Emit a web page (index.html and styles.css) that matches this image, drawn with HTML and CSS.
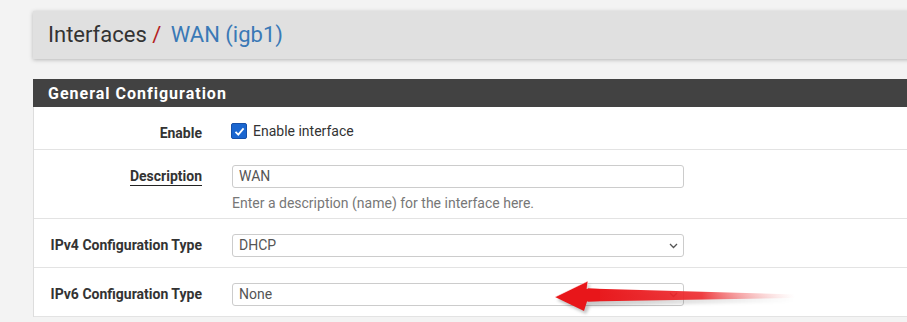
FILE: index.html
```html
<!DOCTYPE html>
<html>
	<head>
		<meta charset="utf-8">
		<link rel="stylesheet" href="styles.css">
	</head>
	<body>
		<div class="page">
			<div class="breadcrumb">
				<h1>Interfaces <span class="sep">/</span> <a href="#">WAN (igb1)</a></h1>
			</div>

			<div class="panel">
				<div class="panel-heading">General Configuration</div>
				<div class="panel-body">
					<div class="row row-enable">
						<div class="label">Enable</div>
						<div class="field">
							<label class="check"><span class="box"><svg width="11" height="11" viewBox="0 0 11 11"><path d="M1.5 5.8 L4.3 8.6 L9.6 2.4" fill="none" stroke="#fff" stroke-width="1.8"/></svg></span>Enable interface</label>
						</div>
					</div>
					<div class="row row-desc">
						<div class="label"><span class="under">Description</span></div>
						<div class="field">
							<div class="input">WAN</div>
							<div class="help">Enter a description (name) for the interface here.</div>
						</div>
					</div>
					<div class="row">
						<div class="label">IPv4 Configuration Type</div>
						<div class="field">
							<div class="input select">DHCP<svg class="chev" width="9" height="6" viewBox="0 0 9 6"><path d="M1 1 L4.5 4.5 L8 1" fill="none" stroke="#555" stroke-width="1.3"/></svg></div>
						</div>
					</div>
					<div class="row">
						<div class="label">IPv6 Configuration Type</div>
						<div class="field">
							<div class="input select">None<svg class="chev" width="9" height="6" viewBox="0 0 9 6"><path d="M1 1 L4.5 4.5 L8 1" fill="none" stroke="#555" stroke-width="1.3"/></svg></div>
						</div>
					</div>
				</div>
			</div>
		</div>

		<!-- annotation arrow drawn over the screenshot -->
		<svg class="arrow" width="280" height="45" viewBox="0 0 280 45">
			<defs>
				<linearGradient id="shaft" x1="0" y1="0" x2="1" y2="0">
					<stop offset="0" stop-color="#e8161a"/>
					<stop offset="0.55" stop-color="#ee2a2e" stop-opacity="0.9"/>
					<stop offset="1" stop-color="#f5a0a0" stop-opacity="0"/>
				</linearGradient>
				<linearGradient id="shade" x1="0" y1="0" x2="1" y2="0">
					<stop offset="0" stop-color="#000" stop-opacity="0.25"/>
					<stop offset="1" stop-color="#000" stop-opacity="0"/>
				</linearGradient>
				<filter id="blur"><feGaussianBlur stdDeviation="1.6"/></filter>
			</defs>
			<path d="M17 25 L50 9 L49 17 L255 23 L255 27 L50 31 L46 39 Z" fill="url(#shade)" filter="url(#blur)"/>
			<path d="M48 13.5 L255 19.5 L255 23 L48 26.5 Z" fill="url(#shaft)"/>
			<path d="M15 22 L48 6 L47 13.5 L60 13.9 L60 26 L47 26.5 L44 36 Z" fill="#e8161a"/>
			<path d="M15 22 L48 6 L47 14" fill="none" stroke="#fff" stroke-opacity="0.55" stroke-width="1"/>
		</svg>
	</body>
</html>
```

FILE: styles.css
```css
body, html {
	height: 100%;
	margin: 0;
	padding: 0;
}

body {
	background: #f3f3f3;
	font-family: Roboto, "Liberation Sans", sans-serif;
	color: #333;
	overflow: hidden;
	position: relative;
}

.page {
	width: 1000px;
	padding: 11px 0 0 33px;
}

.breadcrumb {
	background: #e0e0e0;
	height: 48px;
	box-shadow: 0 1px 4px rgba(0, 0, 0, 0.25);
	padding-left: 15px;
}

.breadcrumb h1 {
	margin: 0;
	font-size: 22px;
	font-weight: 400;
	line-height: 47px;
	color: #333;
}

.breadcrumb .sep {
	color: #b41f1f;
}

.breadcrumb a {
	color: #3a79b6;
	text-decoration: none;
	margin-left: 4px;
}

.panel {
	margin-top: 20px;
	background: #fff;
	border-left: 1px solid #ddd;
}

.panel-heading {
	background: #424242;
	color: #fff;
	height: 28px;
	line-height: 29px;
	padding-left: 15px;
	margin-left: -1px;
	font-size: 16px;
	font-weight: 700;
	letter-spacing: 1px;
}

.row {
	display: flex;
	align-items: flex-start;
	height: 49px;
	box-sizing: border-box;
	padding-top: 15px;
	border-bottom: 1px solid #e3e3e3;
}

.row-enable {
	height: 43px;
}

.row-desc {
	height: 69px;
}

.label {
	width: 168px;
	padding-right: 15px;
	text-align: right;
	font-size: 14px;
	font-weight: 700;
	line-height: 23px;
	color: #333;
}

.under {
	border-bottom: 1px solid #222;
	padding-bottom: 1px;
}

.field {
	padding-left: 15px;
}

.check {
	display: flex;
	align-items: center;
	font-size: 14px;
	line-height: 20px;
	color: #333;
	margin-top: -1px;
	margin-left: -1px;
}

.check .box {
	width: 14px;
	height: 14px;
	border: 1px solid #1750a8;
	border-radius: 2px;
	background: #1a66d0;
	margin-right: 6px;
	display: flex;
	align-items: center;
	justify-content: center;
}

.input {
	width: 452px;
	height: 23px;
	box-sizing: border-box;
	border: 1px solid #ccc;
	border-radius: 3px;
	padding-left: 6px;
	font-size: 14px;
	line-height: 21px;
	color: #555;
	background: #fff;
}

.select {
	display: flex;
	align-items: center;
	justify-content: space-between;
	padding-right: 5px;
}

.chev {
	display: block;
}

.help {
	margin-top: 5px;
	font-size: 14px;
	line-height: 20px;
	color: #777;
}

.arrow {
	position: absolute;
	left: 540px;
	top: 275px;
}
```
